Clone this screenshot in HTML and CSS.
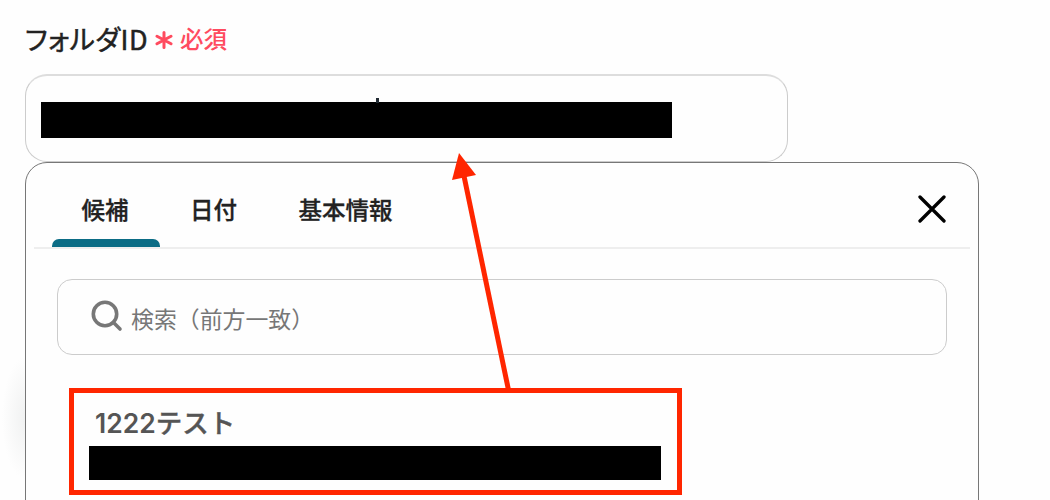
FILE: index.html
```
<!DOCTYPE html>
<html lang="ja">
<head>
    <meta charset="UTF-8">
    <meta name="viewport" content="width=device-width, initial-scale=1.0">
    <title>フォルダID</title>
    <link rel="stylesheet" href="styles.css">
</head>
<body>
    <div class="field">
        <div class="field-label">
            <span class="label-text">フォルダID</span>
            <svg class="required-mark" viewBox="0 0 18 18" width="18" height="18">
                <path d="M9 1.5v15M2 5.2l14 7.6M16 5.2L2 12.8"/>
            </svg>
            <span class="required-text">必須</span>
        </div>
        <div class="field-input">
            <span class="caret"></span>
            <div class="mask mask-input"></div>
        </div>
        <div class="panel">
            <div class="tabs">
                <div class="tab active">候補</div>
                <div class="tab">日付</div>
                <div class="tab">基本情報</div>
                <svg class="close" viewBox="0 0 28 28" width="28" height="28">
                    <path d="M2 2l24 24M26 2L2 26"/>
                </svg>
            </div>
            <div class="search">
                <svg class="search-icon" viewBox="0 0 32 32" width="32" height="32">
                    <circle cx="14" cy="14" r="11.7"/>
                    <path d="M22.5 22.5l6.5 6.5"/>
                </svg>
                <span class="placeholder">検索（前方一致）</span>
            </div>
            <div class="item">
                <div class="item-name">1222<span class="item-kana">テスト</span></div>
                <div class="mask mask-item"></div>
            </div>
        </div>
    </div>
    <!-- arrow from the candidate to the input -->
    <svg class="arrow" viewBox="0 0 1050 500" width="1050" height="500">
        <path class="arrow-line" d="M508.5 390L464 176"/>
        <path class="arrow-head" d="M459 153l17 22-24 5z"/>
    </svg>
</body>
</html>
```

FILE: styles.css
```
* {
    box-sizing: border-box;
}
body {
    margin: 0;
    height: 500px;
    overflow: hidden;
    background: radial-gradient(ellipse 24px 62px at 26px 418px, #f0f1f1, #fefefe) no-repeat #fefefe;
    color: #222;
    font-family: Inter, "Noto Sans CJK JP", sans-serif;
}
.field {
    width: 954px;
    margin-left: 25px;
}
.field-label {
    display: flex;
    align-items: center;
    height: 74px;
    padding-top: 1px;
}
.label-text {
    margin-top: 2px;
    font-family: "Noto Sans CJK JP", sans-serif;
    font-size: 27px;
    font-weight: 400;
    letter-spacing: 0.5px;
    font-feature-settings: "palt";
    white-space: nowrap;
    -webkit-text-stroke: 0.5px #222;
}
.required-mark {
    margin: 5px 7px 0 7px;
    fill: none;
    stroke: #ff4b5f;
    stroke-width: 3;
    stroke-linecap: round;
}
.required-text {
    color: #ff4b5f;
    font-size: 23.5px;
    font-weight: 500;
}
.field-input {
    position: relative;
    width: 763px;
    height: 88px;
    padding: 26px 15px;
    border: 1px solid #ccc;
    border-top: 2px solid #ddd;
    border-radius: 22px;
}
.caret {
    position: absolute;
    left: 350px;
    top: 22px;
    width: 3px;
    height: 5px;
    background-color: #222b33;
}
.mask {
    background-color: #000;
}
.mask-input {
    width: 631px;
    height: 36px;
}
.panel {
    height: 360px;
    padding: 0 8px;
    border: 1px solid #777;
    border-radius: 22px;
    background-color: #fefefe;
}
.tabs {
    display: flex;
    height: 86px;
    padding-left: 17px;
    border-bottom: 2px solid #eee;
}
.tab {
    display: flex;
    flex-direction: column;
    height: 84px;
    padding: 31px 31px 0 30.5px;
    font-size: 23.5px;
    line-height: 34px;
    font-weight: 500;
    -webkit-text-stroke: 0.3px #222;
}
/* selected tab underline */
.active::after {
    content: "";
    height: 8px;
    margin: 11px -31px 0 -30px;
    border-radius: 7px 7px 0 0;
    background-color: #0b6c85;
}
.close {
    margin: 32px 24px 0 auto;
    fill: none;
    stroke: #000;
    stroke-width: 3.3;
    stroke-linecap: round;
}
.search {
    display: flex;
    align-items: center;
    width: 890px;
    height: 76px;
    margin: 30px 0 0 23px;
    padding-left: 33px;
    border: 1px solid #ccc;
    border-radius: 15px;
}
.search-icon {
    margin-top: -2px;
    fill: none;
    stroke: #777;
    stroke-width: 3.6;
    stroke-linecap: round;
}
.placeholder {
    margin: 1px 0 0 8px;
    color: #777;
    font-size: 22.9px;
    font-weight: 400;
}
.item {
    width: 613px;
    height: 107px;
    margin: 33px 0 0 35px;
    padding: 10px 15px 0;
    border: 5px solid #ff2600;
}
.item-name {
    height: 43px;
    padding-left: 6px;
    color: #555;
    font-size: 26.5px;
    line-height: 40px;
    font-weight: 600;
}
.item-kana {
    font-weight: 500;
    -webkit-text-stroke: 0.4px #555;
}
.mask-item {
    width: 572px;
    height: 34px;
}
.arrow {
    position: absolute;
    left: 0;
    top: 0;
}
.arrow-line {
    stroke: #ff2600;
    stroke-width: 5;
}
.arrow-head {
    fill: #ff2600;
}
```
